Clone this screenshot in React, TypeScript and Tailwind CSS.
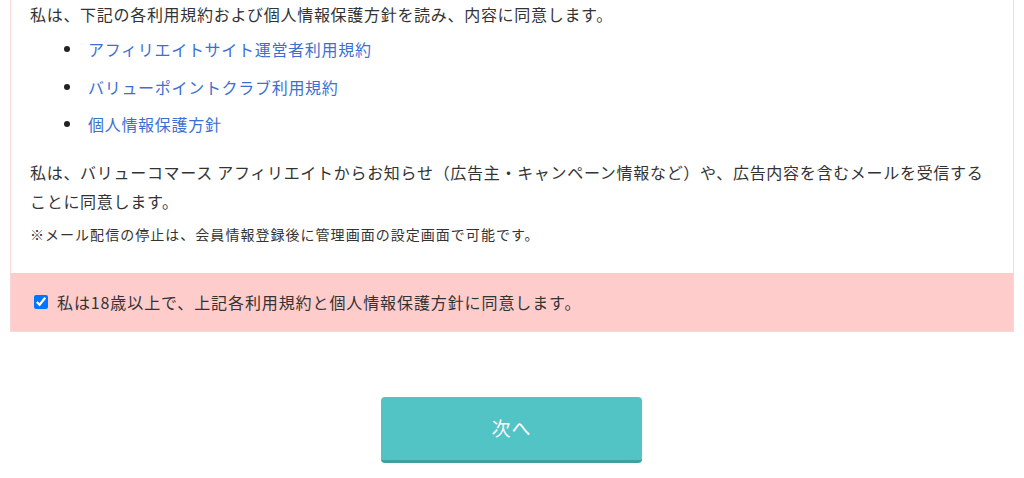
import React from "react";

const links = [
  "アフィリエイトサイト運営者利用規約",
  "バリューポイントクラブ利用規約",
  "個人情報保護方針",
];

export default function App() {
  return (
    <div
      className="w-[1024px] h-[478px] bg-white text-[#333333] overflow-hidden"
      style={{ fontFamily: '"Noto Sans CJK JP", "Noto Sans", sans-serif' }}
    >
      <div className="ml-[10px] w-[1004px] border-x border-b border-[#f8d7d7]">
        <div className="pl-[19px] pr-[19px] pb-[27px]">
          <p className="text-[16px] leading-[29px] tracking-[0.7px]">
            私は、下記の各利用規約および個人情報保護方針を読み、内容に同意します。
          </p>
          <ul className="mt-[1.5px]">
            {links.map((l) => (
              <li key={l} className="flex items-center h-[37.5px]">
                <span className="ml-[34px] w-[6px] h-[6px] rounded-full bg-[#222]" />
                <a
                  href="#"
                  className="ml-[18px] text-[16px] tracking-[0.7px] text-[#3b6fd4]"
                >
                  {l}
                </a>
              </li>
            ))}
          </ul>
          <p className="mt-[14.5px] text-[16px] leading-[29px] tracking-[0.7px]">
            私は、バリューコマース アフィリエイトからお知らせ（広告主・キャンペーン情報など）や、広告内容を含むメールを受信することに同意します。
          </p>
          <p className="mt-[6.5px] text-[14px] leading-[24px] tracking-[1.03px]">
            ※メール配信の停止は、会員情報登録後に管理画面の設定画面で可能です。
          </p>
        </div>
        <label className="flex items-center h-[58px] bg-[#ffcccc] pl-[23px]">
          <input
            type="checkbox"
            defaultChecked
            className="w-[14px] h-[14px] m-0 accent-[#0075ff]"
          />
          <span className="ml-[9px] text-[16px] tracking-[0.9px] leading-[29px]">
            私は18歳以上で、上記各利用規約と個人情報保護方針に同意します。
          </span>
        </label>
      </div>
      <div className="flex justify-center mt-[65px]">
        <button className="w-[261px] h-[66px] rounded-[4px] bg-[#53c4c5] border-b-[3px] border-[#3fa0a0] text-white text-[19px] tracking-[1px] ml-[-1px]">
          次へ
        </button>
      </div>
    </div>
  );
}
